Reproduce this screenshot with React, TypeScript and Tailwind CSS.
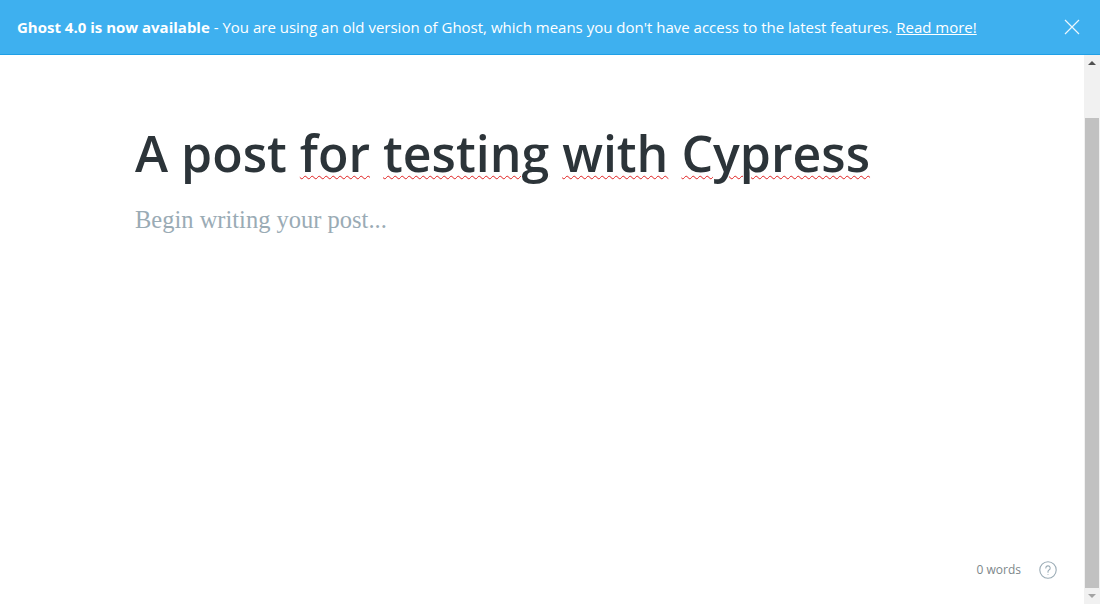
import React from 'react';

const Banner: React.FC = () => (
  <div className="h-[55px] shrink-0 bg-[#3eb0ef] border-b border-[#1f9fe6] flex items-center pl-[17px] pr-[20px] text-white font-['Open_Sans',sans-serif] text-[15px]">
    <p className="flex-1 whitespace-nowrap">
      <span className="font-bold">Ghost 4.0 is now available</span>
      {' - You are using an old version of Ghost, which means you don\'t have access to the latest features. '}
      <a className="underline">Read more!</a>
    </p>
    <button className="w-[16px] h-[16px] text-white/90">
      <svg viewBox="0 0 16 16" className="w-[16px] h-[16px]" fill="none" stroke="currentColor" strokeWidth="1.2">
        <path d="M1 1 L15 15 M15 1 L1 15" />
      </svg>
    </button>
  </div>
);

const Scrollbar: React.FC = () => (
  <div className="w-[16px] shrink-0 bg-[#f1f1f1] flex flex-col items-center">
    <div className="h-[16px] flex items-center justify-center">
      <svg viewBox="0 0 8 4" className="w-[8px] h-[4px]"><path d="M0 4 L4 0 L8 4 Z" fill="#505050" /></svg>
    </div>
    <div className="h-[47px]" />
    <div className="w-[14px] flex-1 bg-[#c1c1c1]" />
    <div className="h-[16px] flex items-center justify-center">
      <svg viewBox="0 0 8 4" className="w-[8px] h-[4px]"><path d="M0 0 L4 4 L8 0 Z" fill="#a3a3a3" /></svg>
    </div>
  </div>
);

const Misspelled: React.FC<{ children: React.ReactNode }> = ({ children }) => (
  <span className="underline decoration-wavy decoration-[#e02020] decoration-1 underline-offset-[3px]">{children}</span>
);

export default function App() {
  return (
    <div className="h-[604px] w-[1100px] flex flex-col bg-white overflow-hidden">
      <Banner />
      <div className="flex-1 flex min-h-0">
        <main className="flex-1 flex flex-col">
          <div className="pl-[135px] pt-[66px] flex-1">
            <h1 className="font-['Open_Sans',sans-serif] font-semibold text-[50px] leading-[64px] text-[#2c3439] whitespace-nowrap">
              A post <Misspelled>for</Misspelled> <Misspelled>testing</Misspelled> <Misspelled>with</Misspelled> <Misspelled>Cypress</Misspelled>
            </h1>
            <p className="mt-[17px] font-['Liberation_Serif',serif] text-[24.5px] text-[#9aabb5]">Begin writing your post...</p>
          </div>
          <div className="h-[52px] flex items-start justify-end pr-[27px] gap-[18px] pt-[8px]">
            <span className="font-['Open_Sans',sans-serif] text-[12px] text-[#7d878a] leading-[20px]">0 words</span>
            <svg viewBox="0 0 18 18" className="w-[18px] h-[18px] mt-[1px]" fill="none" stroke="#9aabb5" strokeWidth="1.1">
              <circle cx="9" cy="9" r="8.2" />
              <path d="M6.8 7 a2.2 2.2 0 1 1 3.2 2 c-0.7 0.4 -1 0.8 -1 1.6 v0.6" strokeLinecap="round" />
              <circle cx="9" cy="13.4" r="0.5" fill="#9aabb5" stroke="none" />
            </svg>
          </div>
        </main>
        <Scrollbar />
      </div>
    </div>
  );
}
